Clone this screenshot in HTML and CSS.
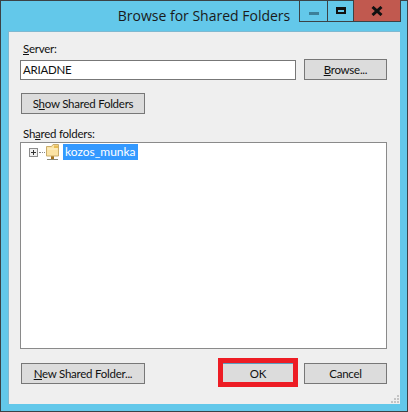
FILE: index.html
```html
<!DOCTYPE html>
<html lang="en">
<head>
    <meta charset="UTF-8">
    <title>Browse for Shared Folders</title>
    <link rel="stylesheet" href="styles.css">
</head>
<body>
    <div class="window">
        <div class="titlebar">
            <span class="title">Browse for Shared Folders</span>
            <div class="controls">
                <div class="ctl ctl-min"><span class="min-bar"></span></div>
                <div class="ctl ctl-max"><span class="max-box"></span></div>
                <div class="ctl ctl-close">
                    <svg width="12" height="10" viewBox="0 0 12 10"><path d="M1.500 1 L10.500 9 M10.500 1 L1.500 9" stroke="#111" stroke-width="3" fill="none"/></svg>
                </div>
            </div>
        </div>
        <div class="content">
            <label class="label"><u>S</u>erver:</label>
            <div class="row server-row">
                <div class="input">ARIADNE</div>
                <button class="btn btn-small"><u>B</u>rowse...</button>
            </div>
            <button class="btn btn-wide show-btn">S<u>h</u>ow Shared Folders</button>
            <label class="label shared-label">Sh<u>a</u>red folders:</label>
            <div class="tree">
                <div class="tree-item">
                    <span class="expander"></span>
                    <span class="dots"></span>
                    <svg class="folder" width="13" height="17" viewBox="0 0 13 17">
                        <path d="M6.500 12v3" stroke="#a8751c" stroke-width="3"/>
                        <path d="M1 15.500h11" stroke="#8a8a7a" stroke-width="1"/>
                        <path d="M.5 2.500h5l1.500-2h5.500v11.500h-12z" fill="#fbe3a4" stroke="#c9ac6b"/>
                        <path d="M1.500 5h10" stroke="#fff3cf"/>
                        <path d="M8 1.500h4v2.500h-4z" fill="#e9bd54"/>
                    </svg>
                    <span class="tree-text">kozos_munka</span>
                </div>
            </div>
            <div class="row bottom-row">
                <button class="btn btn-wide"><u>N</u>ew Shared Folder...</button>
                <div class="right-btns">
                    <button class="btn btn-ok">OK</button>
                    <button class="btn btn-small">Cancel</button>
                </div>
            </div>
            <svg class="grip" width="10" height="10" viewBox="0 0 10 10">
                <path d="M7 1h2v2h-2zM4 4h2v2h-2zM7 4h2v2h-2zM1 7h2v2h-2zM4 7h2v2h-2zM7 7h2v2h-2z" fill="#c4c4c4"/>
            </svg>
        </div>
    </div>
</body>
</html>
```

FILE: styles.css
```css
body {
    margin: 0;
    font-family: Lato, "Open Sans", sans-serif;
    font-size: 11.5px;
    letter-spacing: -0.25px;
    color: #111;
}
.window {
    width: 408px;
    height: 412px;
    box-sizing: border-box;
    border: 1px solid #3b4246;
    background-color: #63c8ea;
    padding: 0 7px 7px 7px;
    display: flex;
    flex-direction: column;
}
.titlebar {
    height: 30px;
    flex: none;
    position: relative;
    text-align: center;
}
.title {
    display: block;
    font-family: "Open Sans", sans-serif;
    font-size: 14px;
    letter-spacing: 0;
    line-height: 30px;
    color: #1a1a1a;
}
.controls {
    position: absolute;
    top: -1px;
    right: -1px;
    display: flex;
    height: 22px;
    border: 1px solid #3b4246;
    border-top: none;
    box-sizing: border-box;
}
.ctl {
    display: flex;
    align-items: center;
    justify-content: center;
    height: 21px;
}
.ctl-min {
    width: 27px;
    border-right: 1px solid #3b4246;
}
.ctl-max {
    width: 25px;
    border-right: 1px solid #3b4246;
}
.ctl-close {
    width: 46px;
    background-color: #c1594f;
}
.min-bar {
    width: 10px;
    height: 3px;
    margin-top: 5px;
    background-color: #3c7f99;
}
.max-box {
    width: 6px;
    height: 2px;
    border: 2px solid #111;
    border-top-width: 3px;
}
.content {
    flex: 1;
    background-color: #efefef;
    border: 1px solid #7fb9d1;
    border-bottom: none;
    border-right: none;
    padding: 8px 13px 0 11px;
    position: relative;
}
.label {
    display: block;
    margin-left: 3px;
    line-height: 17px;
}
.row {
    display: flex;
    justify-content: space-between;
}
.server-row {
    margin-top: 2px;
    align-items: center;
}
.input {
    width: 276px;
    height: 20px;
    box-sizing: border-box;
    border: 1px solid #777;
    background-color: #fff;
    line-height: 18px;
    padding-left: 2px;
}
.btn {
    display: block;
    height: 21px;
    box-sizing: border-box;
    border: 1px solid #777;
    background-color: #dcdcdc;
    font: inherit;
    letter-spacing: inherit;
    color: #111;
    padding: 0;
    text-align: center;
    line-height: 17px;
}
.btn-small {
    width: 83px;
}
.btn-wide {
    width: 124px;
    margin-left: 1px;
}
.show-btn {
    margin-top: 13px;
}
.shared-label {
    margin-top: 11px;
}
.tree {
    height: 207px;
    margin-top: 0;
    box-sizing: border-box;
    border: 1px solid #8a8a8a;
    background-color: #fff;
    padding: 0 0 0 8px;
}
.tree-item {
    display: flex;
    align-items: center;
    height: 18px;
}
.expander {
    width: 7px;
    height: 7px;
    border: 1px solid #8c8c8c;
    background: linear-gradient(#333, #333) center / 5px 1px no-repeat,
        linear-gradient(#333, #333) center / 1px 5px no-repeat,
        #f0f0f0;
    flex: none;
}
.dots {
    width: 6px;
    margin: 0 1px 0 1px;
    border-top: 1px dotted #888;
}
.folder {
    flex: none;
}
.tree-text {
    margin-left: 4px;
    padding: 0 2px;
    background-color: #3399ff;
    color: #fff;
    line-height: 16px;
    font-size: 12px;
    letter-spacing: 0;
}
.bottom-row {
    margin-top: 14px;
}
.right-btns {
    display: flex;
    gap: 10px;
}
.btn-ok {
    width: 72px;
    position: relative;
    border-color: #5a9ec0;
}
/* red marker drawn on top of the OK button */
.btn-ok::after {
    content: "";
    position: absolute;
    top: -6px;
    left: -5px;
    right: -5px;
    bottom: -4px;
    border: 5px solid #ed1c24;
}
.grip {
    position: absolute;
    right: 0;
    bottom: 0;
}
```
